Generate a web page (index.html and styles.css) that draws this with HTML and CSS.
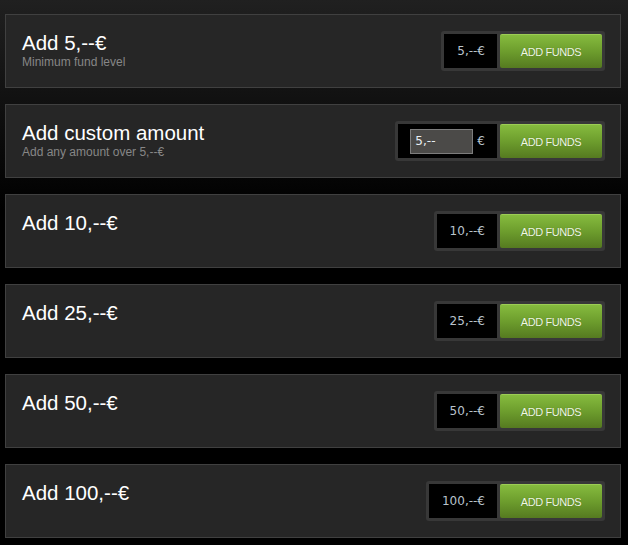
FILE: index.html
```html
<!DOCTYPE html>
<html lang="en">
<head>
<meta charset="utf-8">
<title>Add funds</title>
<link rel="stylesheet" href="styles.css">
</head>
<body>
<div class="page">
  <div class="row">
    <div class="info">
      <div class="title">Add 5,--€</div>
      <div class="sub">Minimum fund level</div>
    </div>
    <div class="buy">
      <div class="price">5,--€</div>
      <a class="btn" href="#">ADD FUNDS</a>
    </div>
  </div>
  <div class="row">
    <div class="info">
      <div class="title">Add custom amount</div>
      <div class="sub">Add any amount over 5,--€</div>
    </div>
    <div class="buy">
      <div class="price custom">
        <input class="amount" type="text" value="5,--">
        <span class="cur">€</span>
      </div>
      <a class="btn" href="#">ADD FUNDS</a>
    </div>
  </div>
  <div class="row">
    <div class="info">
      <div class="title">Add 10,--€</div>
    </div>
    <div class="buy">
      <div class="price">10,--€</div>
      <a class="btn" href="#">ADD FUNDS</a>
    </div>
  </div>
  <div class="row">
    <div class="info">
      <div class="title">Add 25,--€</div>
    </div>
    <div class="buy">
      <div class="price">25,--€</div>
      <a class="btn" href="#">ADD FUNDS</a>
    </div>
  </div>
  <div class="row">
    <div class="info">
      <div class="title">Add 50,--€</div>
    </div>
    <div class="buy">
      <div class="price">50,--€</div>
      <a class="btn" href="#">ADD FUNDS</a>
    </div>
  </div>
  <div class="row">
    <div class="info">
      <div class="title">Add 100,--€</div>
    </div>
    <div class="buy">
      <div class="price">100,--€</div>
      <a class="btn" href="#">ADD FUNDS</a>
    </div>
  </div>
</div>
</body>
</html>
```
FILE: styles.css
```css
html, body {
  margin: 0;
  padding: 0;
}
body {
  background: #000 linear-gradient(to bottom, #202020 0, #000 210px) no-repeat;
  min-height: 545px;
  font-family: "Liberation Sans", Arial, sans-serif;
}
.page {
  display: flex;
  flex-direction: column;
  gap: 16px;
  padding: 14px 7px 8px 5px;
}
.row {
  height: 72px;
  border: 1px solid #404040;
  background: #262626;
  display: flex;
  align-items: center;
  justify-content: space-between;
  padding: 0 15px 0 16px;
}
.info {
  align-self: flex-start;
  padding-top: 16px;
}
.title {
  color: #fff;
  font-size: 20.5px;
  line-height: 24px;
}
.sub {
  color: #878787;
  font-size: 12px;
  line-height: 14px;
}
.buy {
  display: flex;
  gap: 3px;
  padding: 3px;
  background: #383838;
  border-radius: 3px;
}
.price {
  height: 34px;
  box-sizing: border-box;
  padding: 0 12px 0 13px;
  background: #000;
  display: flex;
  align-items: center;
  color: #b9c3cc;
  font-family: "DejaVu Sans", Verdana, sans-serif;
  font-size: 12px;
}
.price.custom {
  padding: 0 12px;
  gap: 4px;
}
.amount {
  width: 63px;
  height: 25px;
  box-sizing: border-box;
  margin: 0;
  padding: 0 4px;
  border: 1px solid #7d7d7d;
  background: #4b4a48;
  color: #e8eef4;
  font-family: "DejaVu Sans", Verdana, sans-serif;
  font-size: 12px;
  outline: none;
}
.cur {
  color: #b9c3cc;
}
.btn {
  width: 102px;
  height: 34px;
  box-sizing: border-box;
  display: flex;
  align-items: center;
  justify-content: center;
  border-top: 1px solid #9ccd55;
  border-radius: 2px;
  background: linear-gradient(to bottom, #86bb3e 0, #6d9d2d 50%, #557a20 100%);
  color: #f0f8e4;
  font-size: 11px;
  letter-spacing: -0.4px;
  text-decoration: none;
  text-shadow: 0 0 1px rgba(0, 0, 0, 0.35);
}
```
